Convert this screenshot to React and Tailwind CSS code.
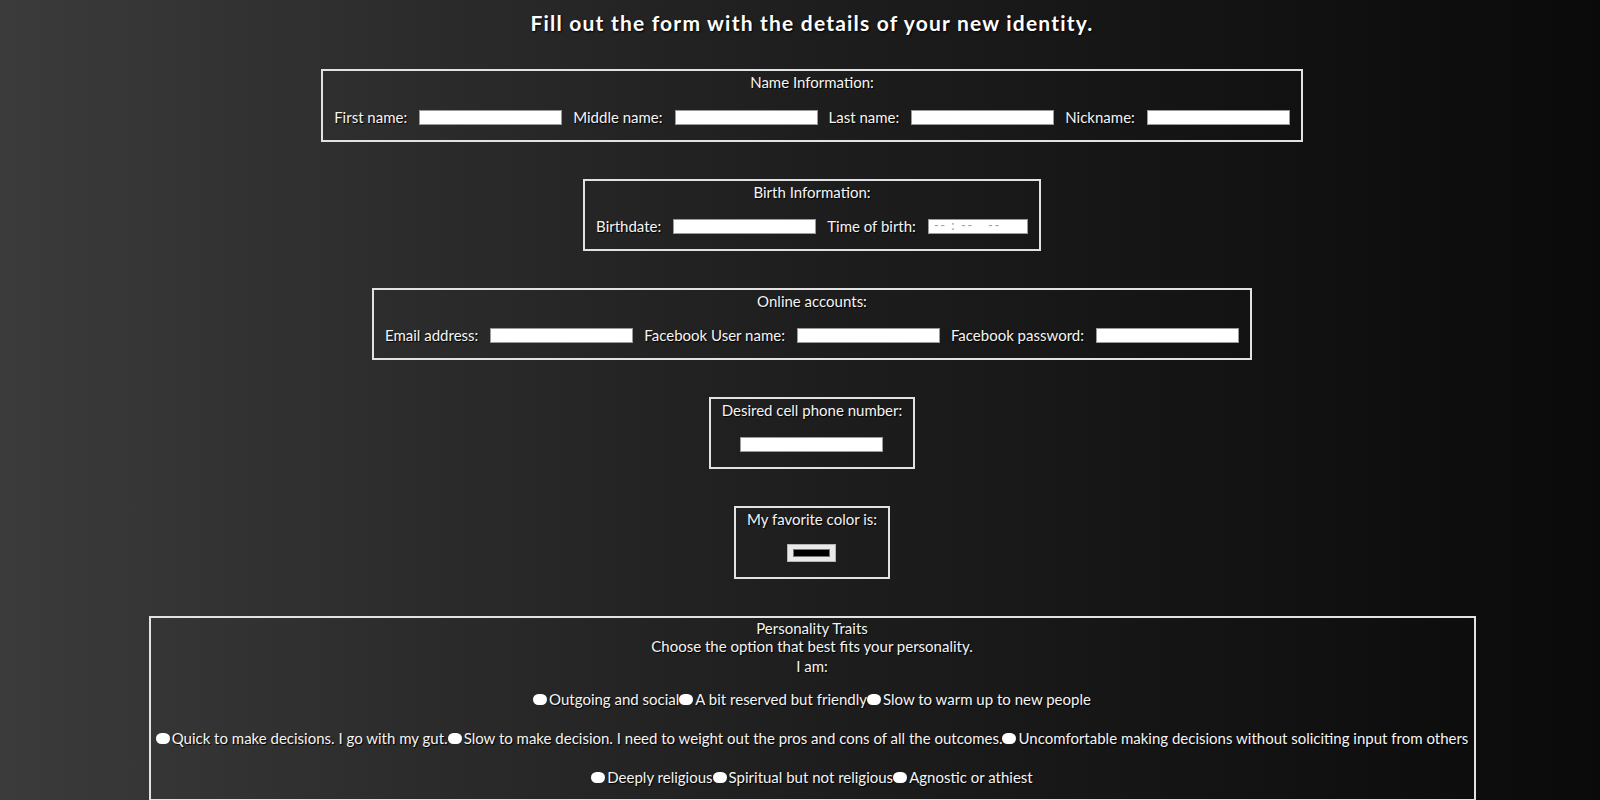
import React from "react";

const shadow = "[text-shadow:1px_1px_1px_#000]";

function Field({ label, children }) {
  return (
    <div className="flex items-center">
      <span className="mr-[12px]">{label}</span>
      {children}
    </div>
  );
}

function TextBox({ w = "w-[143px]" }) {
  return <div className={`${w} h-[15px] bg-white border border-[#9a9a9a]`}></div>;
}

function Box({ title, children, className = "" }) {
  return (
    <div className={`border-2 border-[#e2e2e2] px-[11px] pt-[2px] pb-[13px] ${className}`}>
      <div className="text-center leading-[18px]">{title}</div>
      {children}
    </div>
  );
}

function Radio({ label }) {
  return (
    <span className="inline-flex items-center">
      <span className="inline-block w-[14px] h-[11px] rounded-full bg-white mr-[2px]"></span>
      {label}
    </span>
  );
}

export default function App() {
  return (
    <div
      className={`min-h-[800px] w-full bg-gradient-to-r from-[#3b3b3b] via-[#1e1e1e] to-[#0a0a0a] text-[#f4f4f4] font-['Lato',sans-serif] text-[15px] pl-6 ${shadow}`}
    >
      <div className="flex flex-col items-center">
        <h1 className="pt-[11px] text-[21px] font-bold leading-[24px] tracking-[1.2px] text-white [text-shadow:1px_1px_2px_#000]">
          Fill out the form with the details of your new identity.
        </h1>

        <div className="mt-[34px] flex flex-col items-center gap-[37px]">
          <Box title="Name Information:" className="pb-[12px]">
            <div className="mt-[16px] flex items-center gap-[11px] h-[20px]">
              <Field label="First name:"><TextBox /></Field>
              <Field label="Middle name:"><TextBox /></Field>
              <Field label="Last name:"><TextBox /></Field>
              <Field label="Nickname:"><TextBox /></Field>
            </div>
          </Box>

          <Box title="Birth Information:">
            <div className="mt-[15px] flex items-center gap-[11px] h-[20px]">
              <Field label="Birthdate:"><TextBox /></Field>
              <Field label="Time of birth:">
                <div className="w-[100px] h-[15px] bg-white border border-[#9a9a9a] flex items-center pl-[5px] text-[13px] text-[#a0a0a0] [text-shadow:none] tracking-[1.5px] whitespace-pre">
                  {"-- : --   --"}
                </div>
              </Field>
            </div>
          </Box>

          <Box title="Online accounts:">
            <div className="mt-[15px] flex items-center gap-[11px] h-[20px]">
              <Field label="Email address:"><TextBox /></Field>
              <Field label="Facebook User name:"><TextBox /></Field>
              <Field label="Facebook password:"><TextBox /></Field>
            </div>
          </Box>

          <Box title="Desired cell phone number:">
            <div className="mt-[15px] flex items-center justify-center h-[20px]">
              <TextBox />
            </div>
          </Box>

          <Box title="My favorite color is:" className="pb-[14px]">
            <div className="mt-[15px] flex items-center justify-center h-[20px]">
              <div className="w-[49px] h-[18px] bg-[#e9e9e9] border border-[#b5b5b5] flex items-center justify-center">
                <div className="w-[37px] h-[8px] bg-black border border-[#777]"></div>
              </div>
            </div>
          </Box>

          <div className="w-[1327px] border-2 border-[#e2e2e2] pt-[1px] pb-[12px] text-center whitespace-nowrap">
            <div className="leading-[18px]">Personality Traits</div>
            <div className="leading-[18px]">Choose the option that best fits your personality.</div>
            <div className="leading-[20px] mt-[1px]">I am:</div>
            <div className="mt-[13px] leading-[20px] flex justify-center">
              <Radio label="Outgoing and social" />
              <Radio label="A bit reserved but friendly" />
              <Radio label="Slow to warm up to new people" />
            </div>
            <div className="mt-[19px] leading-[20px] flex justify-center">
              <Radio label="Quick to make decisions. I go with my gut." />
              <Radio label="Slow to make decision. I need to weight out the pros and cons of all the outcomes." />
              <Radio label="Uncomfortable making decisions without soliciting input from others" />
            </div>
            <div className="mt-[19px] leading-[20px] flex justify-center">
              <Radio label="Deeply religious" />
              <Radio label="Spiritual but not religious" />
              <Radio label="Agnostic or athiest" />
            </div>
          </div>
        </div>
      </div>
    </div>
  );
}
